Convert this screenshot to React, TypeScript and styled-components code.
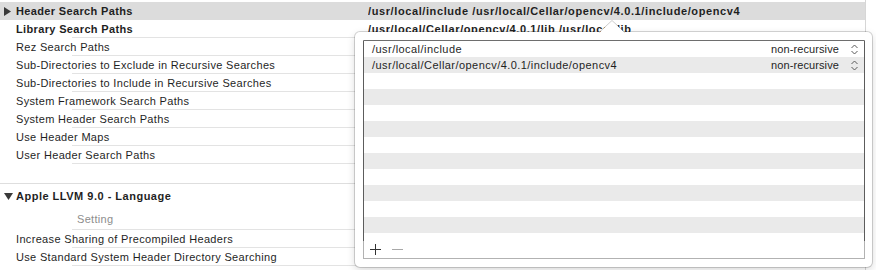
import styled, { createGlobalStyle } from "styled-components";

const GlobalStyle = createGlobalStyle`
  body {
    margin: 0;
    background: #ffffff;
    font-family: "Liberation Sans", Arial, sans-serif;
    font-size: 11px;
    color: #1f1f1f;
  }
`;

const Page = styled.div`
  position: relative;
  display: flex;
  width: 876px;
  height: 270px;
  overflow: hidden;
`;

const Settings = styled.div`
  width: 865px;
  padding-top: 2px;
`;

const Gutter = styled.div`
  flex: 1;
  border-left: 1px solid #d6d6d6;
`;

const rowLine = `linear-gradient(#e3e3e3, #e3e3e3) no-repeat 72px 100% / calc(100% - 72px) 1px`;

const Row = styled.div<{ $selected?: boolean }>`
  display: grid;
  grid-template-columns: 16px 352px 1fr;
  align-items: center;
  height: 18px;
  background: ${(p) => (p.$selected ? "#dcdcdc" : rowLine)};
`;

const Disclosure = styled.div`
  display: flex;
  align-items: center;
  padding-left: 4px;
  color: #3a3a3a;
`;

const Label = styled.span<{ $bold?: boolean }>`
  font-weight: ${(p) => (p.$bold ? 700 : 400)};
  letter-spacing: ${(p) => (p.$bold ? "0.35px" : "0.33px")};
  white-space: nowrap;
`;

const Value = styled.span`
  font-weight: 700;
  letter-spacing: 0.6px;
  white-space: nowrap;
  overflow: hidden;
`;

const SectionRule = styled.div`
  margin-top: 19px;
  border-top: 1px solid #dedede;
`;

const SectionHeader = styled.div`
  display: grid;
  grid-template-columns: 16px 1fr;
  align-items: center;
  height: 24px;
  font-weight: 700;
  letter-spacing: 0.5px;
`;

const ColumnHeader = styled.div`
  display: flex;
  align-items: center;
  height: 22px;
  padding-left: 77px;
  color: #8d8d8d;
  letter-spacing: 0.3px;
  background: ${rowLine};
`;

const Popover = styled.div`
  position: absolute;
  left: 355px;
  top: 32px;
  width: 517px;
  height: 235px;
  box-sizing: border-box;
  padding: 8px 7px 8px 8px;
  display: flex;
  flex-direction: column;
  background: #ffffff;
  border-radius: 5px;
  box-shadow: 0 0 0 1px rgba(0, 0, 0, 0.16), 0 3px 8px rgba(0, 0, 0, 0.16);
  z-index: 2;
`;

const Arrow = styled.svg`
  position: absolute;
  left: 244px;
  top: -12px;
`;

const Frame = styled.div`
  flex: 1;
  display: flex;
  flex-direction: column;
  border: 1px solid #b2b2b2;
  border-top-color: #6e6e6e;
`;

const List = styled.div`
  height: 200px;
  overflow: hidden;
  margin: 0 -1px;
  border-left: 1px solid #5c5c5c;
  border-right: 1px solid #5c5c5c;
`;

const ListRow = styled.div<{ $striped: boolean }>`
  display: flex;
  align-items: center;
  height: 16px;
  padding: 0 6px 0 8px;
  background: ${(p) => (p.$striped ? "#eaeaea" : "#ffffff")};
`;

const Path = styled.span`
  flex: 1;
  letter-spacing: 0.45px;
  white-space: nowrap;
`;

const Mode = styled.span`
  letter-spacing: 0.1px;
  margin-right: 12px;
`;

const Toolbar = styled.div`
  display: flex;
  align-items: center;
  gap: 11px;
  height: 17px;
  padding-left: 6px;
`;

function Triangle({ open }: { open?: boolean }) {
  return open ? (
    <svg width="9" height="7" viewBox="0 0 9 7">
      <path d="M0 0 H9 L4.5 7 Z" fill="currentColor" />
    </svg>
  ) : (
    <svg width="7" height="9" viewBox="0 0 7 9">
      <path d="M0 0 L7 4.5 L0 9 Z" fill="currentColor" />
    </svg>
  );
}

function Stepper() {
  return (
    <svg width="7" height="11" viewBox="0 0 7 11">
      <path d="M0.5 4 L3.5 1 L6.5 4 M0.5 7 L3.5 10 L6.5 7" fill="none" stroke="#5a5a5a" strokeWidth="1" />
    </svg>
  );
}

function Plus() {
  return (
    <svg width="11" height="11" viewBox="0 0 11 11">
      <path d="M5.5 0 V11 M0 5.5 H11" stroke="#333" strokeWidth="1" />
    </svg>
  );
}

function Minus() {
  return (
    <svg width="11" height="11" viewBox="0 0 11 11">
      <path d="M0 5.5 H11" stroke="#a8a8a8" strokeWidth="1" />
    </svg>
  );
}

const searchPaths = [
  {
    label: "Header Search Paths",
    value: "/usr/local/include /usr/local/Cellar/opencv/4.0.1/include/opencv4",
    bold: true,
    selected: true,
  },
  { label: "Library Search Paths", value: "/usr/local/Cellar/opencv/4.0.1/lib /usr/local/lib", bold: true },
  { label: "Rez Search Paths" },
  { label: "Sub-Directories to Exclude in Recursive Searches" },
  { label: "Sub-Directories to Include in Recursive Searches" },
  { label: "System Framework Search Paths" },
  { label: "System Header Search Paths" },
  { label: "Use Header Maps" },
  { label: "User Header Search Paths" },
];

const languageSettings = [
  "Increase Sharing of Precompiled Headers",
  "Use Standard System Header Directory Searching",
];

const headerPaths = ["/usr/local/include", "/usr/local/Cellar/opencv/4.0.1/include/opencv4"];

export default function App() {
  return (
    <Page>
      <GlobalStyle />
      <Settings>
        {searchPaths.map((s) => (
          <Row key={s.label} $selected={s.selected}>
            <Disclosure>{s.selected && <Triangle />}</Disclosure>
            <Label $bold={s.bold}>{s.label}</Label>
            <Value>{s.value}</Value>
          </Row>
        ))}
        <SectionRule />
        <SectionHeader>
          <Disclosure>
            <Triangle open />
          </Disclosure>
          <span>Apple LLVM 9.0 - Language</span>
        </SectionHeader>
        <ColumnHeader>Setting</ColumnHeader>
        {languageSettings.map((label) => (
          <Row key={label}>
            <Disclosure />
            <Label>{label}</Label>
            <Value />
          </Row>
        ))}
      </Settings>
      <Gutter />

      <Popover>
        <Arrow width="26" height="13" viewBox="0 0 26 13">
          <path d="M0 13 L13 0.5 L26 13 Z" fill="#ffffff" />
          <path d="M0 12.5 L13 0.5 L26 12.5" fill="none" stroke="rgba(0,0,0,0.2)" strokeWidth="1" />
        </Arrow>
        <Frame>
          <List>
            {Array.from({ length: 13 }, (_, i) => (
              <ListRow key={i} $striped={i % 2 === 1}>
                {headerPaths[i] && (
                  <>
                    <Path>{headerPaths[i]}</Path>
                    <Mode>non-recursive</Mode>
                    <Stepper />
                  </>
                )}
              </ListRow>
            ))}
          </List>
          <Toolbar>
            <Plus />
            <Minus />
          </Toolbar>
        </Frame>
      </Popover>
    </Page>
  );
}
